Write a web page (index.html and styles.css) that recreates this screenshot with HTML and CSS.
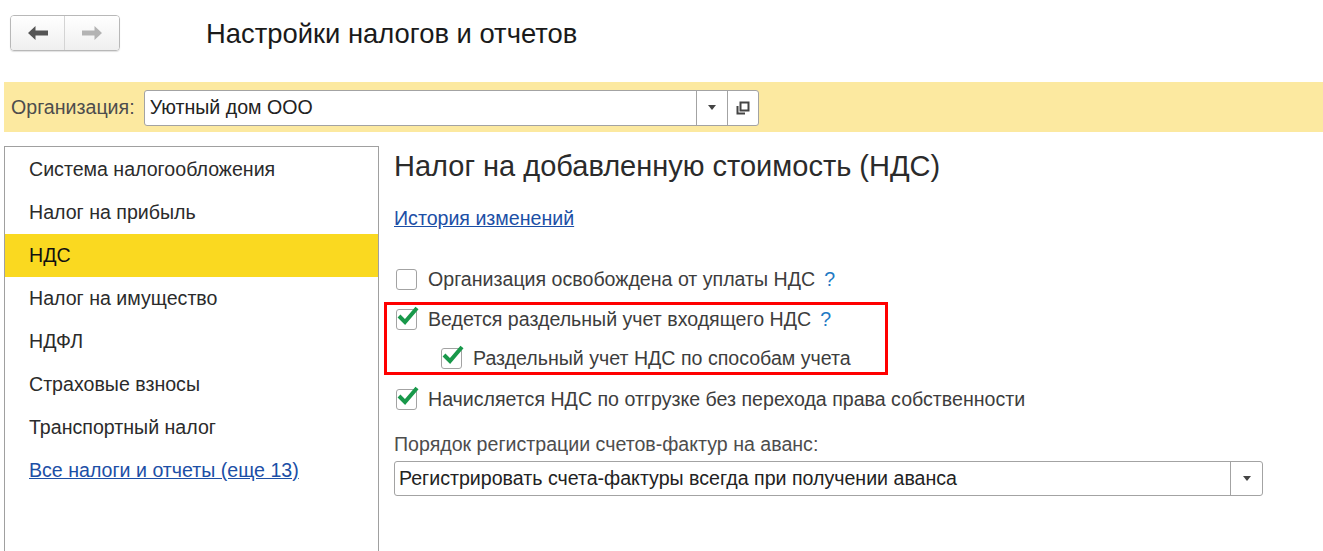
FILE: index.html
```html
<!DOCTYPE html>
<html lang="ru">
<head>
  <meta charset="UTF-8" />
  <title>Настройки налогов и отчетов</title>
  <link rel="stylesheet" href="styles.css">
</head>
<body>
  <div class="topbar">
    <div class="nav">
      <button class="nav-btn back" type="button">
        <svg width="22" height="16" viewBox="0 0 22 16"><path d="M1 8 L8.5 1 V5.5 H21 V10.5 H8.5 V15 Z" fill="#555"/></svg>
      </button>
      <button class="nav-btn fwd" type="button">
        <svg width="22" height="16" viewBox="0 0 22 16"><path d="M21 8 L13.5 1 V5.5 H1 V10.5 H13.5 V15 Z" fill="#b3b3b3"/></svg>
      </button>
    </div>
    <h1 class="title">Настройки налогов и отчетов</h1>
  </div>

  <div class="orgbar">
    <label class="org-label" for="org">Организация:</label>
    <div class="combo">
      <input id="org" class="combo-input" type="text" value="Уютный дом ООО" />
      <span class="combo-btn drop"><i class="tri"></i></span>
      <span class="combo-btn open">
        <svg width="14" height="14" viewBox="0 0 14 14"><path d="M4.5 1.5 H12.5 V9.5 H4.5 Z M1.5 5 V12.5 H9" fill="none" stroke="#444" stroke-width="2"/></svg>
      </span>
    </div>
  </div>

  <div class="main">
    <ul class="sidebar">
      <li>Система налогообложения</li>
      <li>Налог на прибыль</li>
      <li class="active">НДС</li>
      <li>Налог на имущество</li>
      <li>НДФЛ</li>
      <li>Страховые взносы</li>
      <li>Транспортный налог</li>
      <li><a href="#">Все налоги и отчеты (еще 13)</a></li>
    </ul>

    <div class="content">
      <h2 class="heading">Налог на добавленную стоимость (НДС)</h2>
      <a class="history" href="#">История изменений</a>

      <div class="checks">
        <div class="check">
          <span class="box"></span>
          <span class="check-text">Организация освобождена от уплаты НДС</span>
          <span class="help">?</span>
        </div>

        <div class="group">
          <div class="check">
            <span class="box on"><svg width="24" height="22" viewBox="0 0 24 22"><path d="M3 11 L9 17 L21 3" fill="none" stroke="#18984a" stroke-width="4"/></svg></span>
            <span class="check-text">Ведется раздельный учет входящего НДС</span>
            <span class="help">?</span>
          </div>
          <div class="check nested">
            <span class="box on"><svg width="24" height="22" viewBox="0 0 24 22"><path d="M3 11 L9 17 L21 3" fill="none" stroke="#18984a" stroke-width="4"/></svg></span>
            <span class="check-text">Раздельный учет НДС по способам учета</span>
          </div>
        </div>

        <div class="check last">
          <span class="box on"><svg width="24" height="22" viewBox="0 0 24 22"><path d="M3 11 L9 17 L21 3" fill="none" stroke="#18984a" stroke-width="4"/></svg></span>
          <span class="check-text">Начисляется НДС по отгрузке без перехода права собственности</span>
        </div>
      </div>

      <div class="field-label">Порядок регистрации счетов-фактур на аванс:</div>
      <div class="select">
        <span class="select-value">Регистрировать счета-фактуры всегда при получении аванса</span>
        <span class="select-btn"><i class="tri"></i></span>
      </div>
    </div>
  </div>
</body>
</html>
```

FILE: styles.css
```css
body {
  margin: 0;
  font-family: "Liberation Sans", Arial, sans-serif;
  font-size: 19.6px;
  color: #333;
  background: #fff;
  overflow: hidden;
}
.topbar {
  height: 82px;
  display: flex;
  align-items: flex-start;
}
.nav {
  display: flex;
  margin: 15px 0 0 10px;
  border: 1px solid #b8b8b8;
  border-radius: 4px;
  overflow: hidden;
  box-shadow: 0 1px 1px rgba(0,0,0,0.12);
}
.nav-btn {
  width: 54px;
  height: 34px;
  border: none;
  padding: 0;
  background: linear-gradient(#ffffff, #efefef);
  display: flex;
  align-items: center;
  justify-content: center;
}
.nav-btn.back {
  border-right: 1px solid #d4d4d4;
}
.title {
  margin: 18px 0 0 86px;
  font-size: 27.4px;
  font-weight: normal;
  color: #1a1a1a;
}
.orgbar {
  margin-left: 4px;
  height: 50px;
  background: #fce9a0;
  display: flex;
  align-items: center;
  padding-left: 7px;
}
.org-label {
  color: #4d4d4d;
  margin-right: 9px;
}
.combo {
  display: flex;
  width: 613px;
  height: 34px;
  border: 1px solid #a3a3a3;
  border-radius: 3px;
  background: #fff;
  margin-top: 1px;
}
.combo-input {
  flex: 1;
  min-width: 0;
  border: none;
  outline: none;
  font: inherit;
  color: #222;
  padding: 0 5px;
  background: transparent;
}
.combo-btn {
  width: 30px;
  border-left: 1px solid #a3a3a3;
  display: flex;
  align-items: center;
  justify-content: center;
}
.tri {
  width: 0;
  height: 0;
  border-left: 4px solid transparent;
  border-right: 4px solid transparent;
  border-top: 5px solid #444;
}
.main {
  display: flex;
  margin-top: 14px;
}
.sidebar {
  list-style: none;
  margin: 0 0 0 4px;
  padding: 1px 0 0;
  width: 373px;
  height: 420px;
  border: 1px solid #a0a0a0;
  border-bottom: none;
  flex-shrink: 0;
}
.sidebar li {
  height: 43px;
  line-height: 43px;
  padding-left: 24px;
  color: #2b2b2b;
}
.sidebar li.active {
  background: #fad920;
  color: #111;
}
.sidebar a,
.history {
  color: #1c4fa6;
  text-decoration: underline;
}
.content {
  padding-left: 15px;
}
.heading {
  margin: 3px 0 0;
  font-size: 29px;
  font-weight: normal;
  color: #2b2b2b;
  line-height: 34px;
}
.history {
  display: inline-block;
  margin-top: 24px;
  line-height: 22px;
}
.checks {
  margin-top: 29px;
}
.check {
  display: flex;
  align-items: center;
  height: 40px;
  color: #3d3d3d;
}
.box {
  position: relative;
  width: 19px;
  height: 19px;
  border: 1px solid #a3a3a3;
  border-radius: 3px;
  margin: 0 11px 0 2px;
  background: #fff;
  flex-shrink: 0;
}
.box svg {
  position: absolute;
  left: -1px;
  top: -5px;
}
.help {
  color: #1f7ac4;
  margin-left: 9px;
}
.group {
  margin: 3px 0 0 -10px;
  padding-left: 9px;
  width: 504px;
  border: 3px solid #f00;
  box-sizing: border-box;
}
.group .check {
  height: 28px;
  margin-left: -2px;
}
.group .check.nested {
  margin-top: 11px;
  padding-left: 45px;
}
.check.last {
  margin-top: 4px;
}
.field-label {
  margin-top: 14px;
  line-height: 22px;
  color: #4d4d4d;
}
.select {
  display: flex;
  width: 867px;
  height: 33px;
  margin-top: 6px;
  border: 1px solid #a3a3a3;
  border-radius: 3px;
}
.select-value {
  flex: 1;
  padding-left: 4px;
  line-height: 33px;
  color: #222;
}
.select-btn {
  width: 31px;
  border-left: 1px solid #a3a3a3;
  display: flex;
  align-items: center;
  justify-content: center;
}
```
